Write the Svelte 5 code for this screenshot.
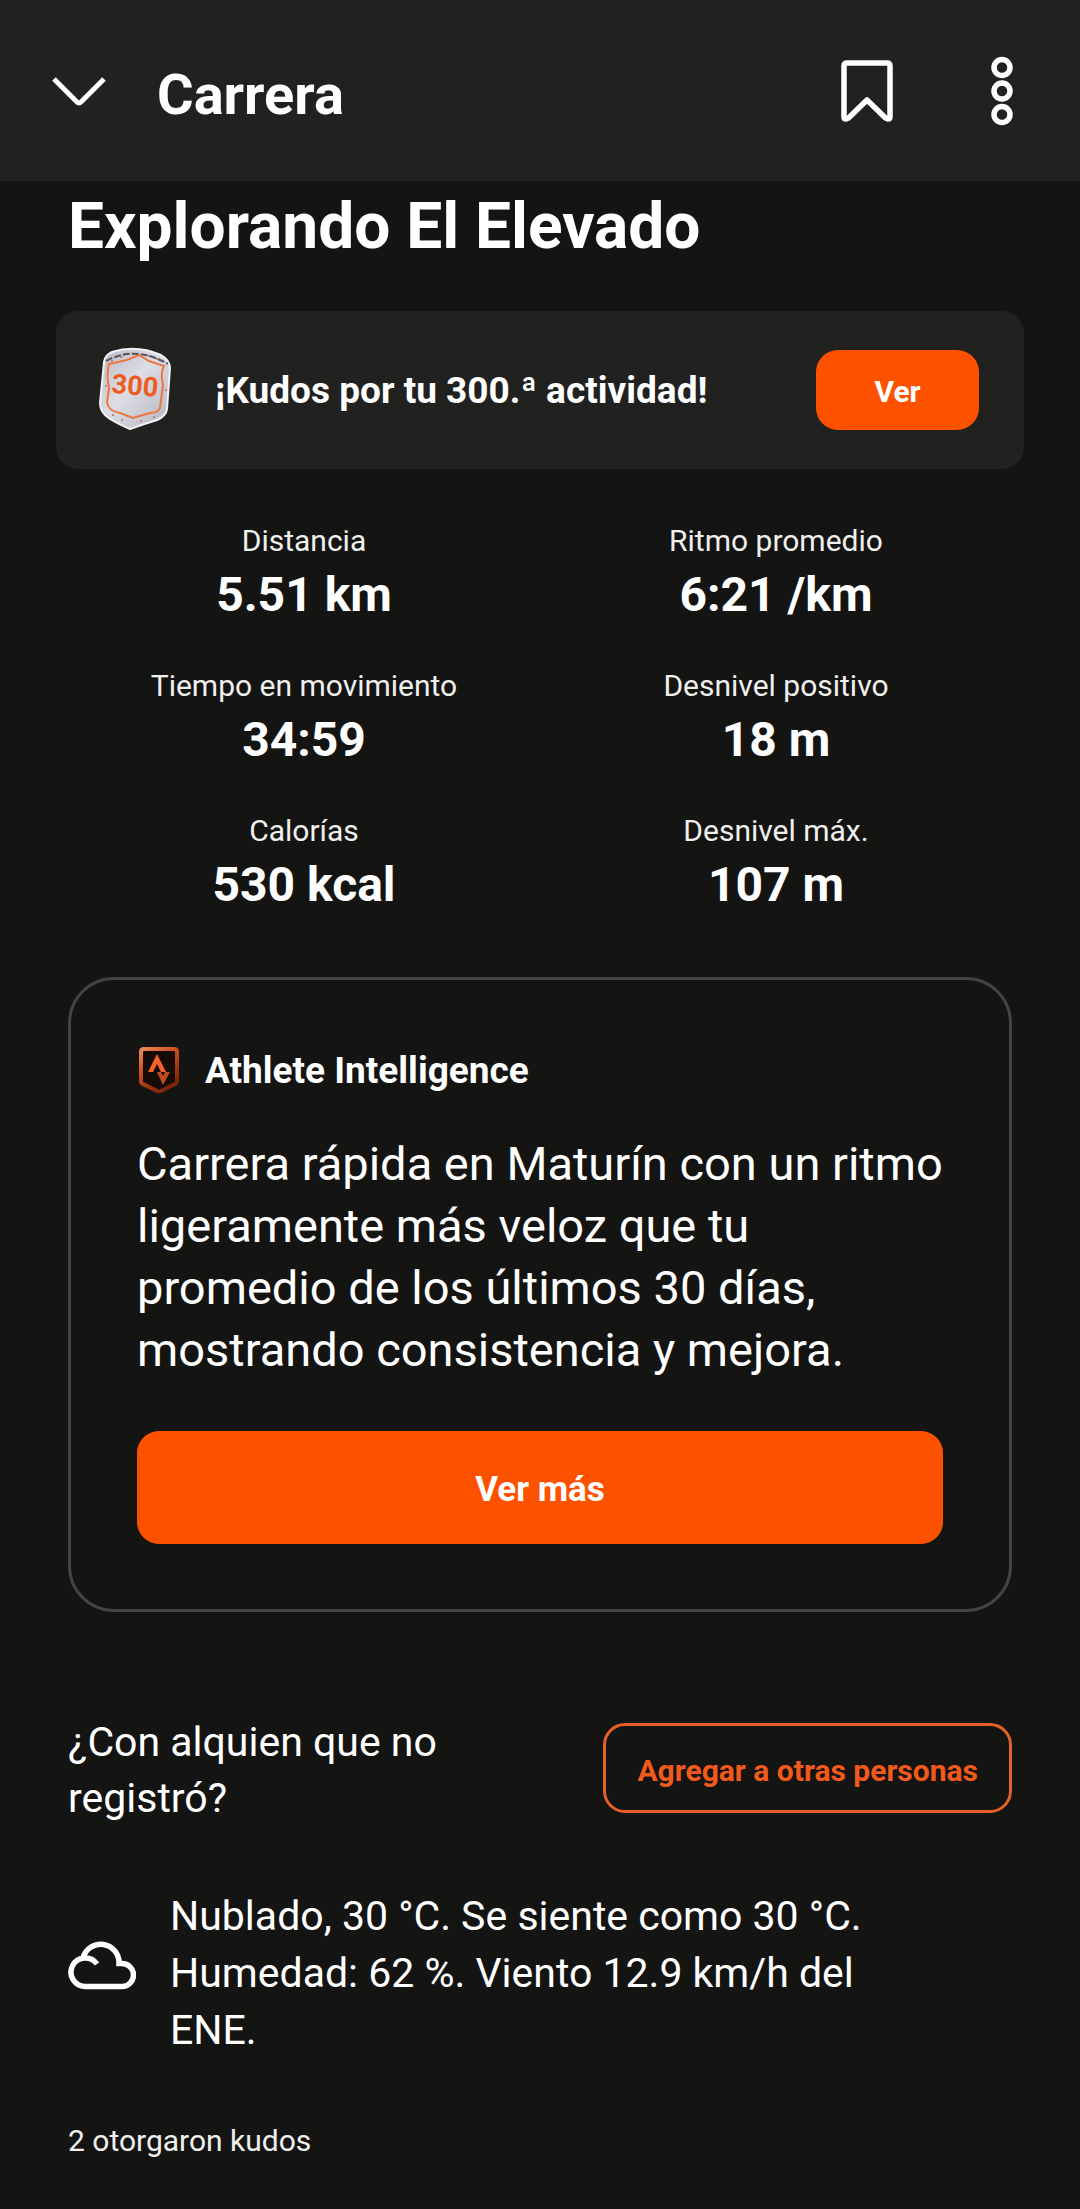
<script>
  let saved = false;

  let stats = [
    { label: "Distancia", value: "5.51 km" },
    { label: "Ritmo promedio", value: "6:21 /km" },
    { label: "Tiempo en movimiento", value: "34:59" },
    { label: "Desnivel positivo", value: "18 m" },
    { label: "Calorías", value: "530 kcal" },
    { label: "Desnivel máx.", value: "107 m" },
  ];
</script>

<header>
  <button class="icon" aria-label="Cerrar">
    <svg width="56" height="40" viewBox="0 0 56 40">
      <path d="M3 8 L26 31 Q28 33 30 31 L53 8" fill="none" stroke="#fff" stroke-width="5" />
    </svg>
  </button>
  <h2>Carrera</h2>
  <button class="icon" aria-label="Guardar" aria-pressed={saved} on:click={() => (saved = !saved)}>
    <svg width="52" height="64" viewBox="0 0 52 64">
      <path
        d="M6 4 H46 Q49 4 49 7 V58 Q49 60 47 60 L44.500 59 L26 41 L7.500 59 L5 60 Q3 60 3 58 V7 Q3 4 6 4 Z"
        fill={saved ? "#fff" : "none"}
        stroke="#fff"
        stroke-width="5.500"
        stroke-linejoin="round"
      />
    </svg>
  </button>
  <button class="icon" aria-label="Más opciones">
    <svg width="22" height="70" viewBox="0 0 22 70" fill="none" stroke="#fff" stroke-width="5.500">
      <circle cx="11" cy="11.500" r="8" />
      <circle cx="11" cy="35" r="8" />
      <circle cx="11" cy="58.500" r="8" />
    </svg>
  </button>
</header>

<main>
  <h1>Explorando El Elevado</h1>

  <section class="banner">
    <svg class="badge" width="76" height="88" viewBox="0 0 76 88">
      <defs>
        <linearGradient id="silver" x1="0" y1="0" x2="1" y2="1">
          <stop offset="0" stop-color="#b9b9c1" />
          <stop offset="0.450" stop-color="#dddde5" />
          <stop offset="1" stop-color="#b4b4bc" />
        </linearGradient>
      </defs>
      <path
        d="M7 16 Q8 9 15 6 Q39 -2 64 9 Q73 14 73 22 L70 63 Q69 70 60 74 Q47 78 33 83 Q21 78 13 73 Q3 67 3 57 Z"
        fill="url(#silver)"
        stroke="#f1f1f5"
        stroke-width="2"
      />
      <path d="M9 15 Q38 -1 71 18" fill="none" stroke="#55555c" stroke-width="2" stroke-dasharray="7 2" />
      <path
        d="M12 18 L30 14 L42 9 L52 15 L67 20 Q63 27 66 39 L63 62 Q61 67 53 67 L36 72 L23 67 Q11 65 10 56 L12 42 Q9 30 12 18 Z"
        fill="none"
        stroke="#ee7440"
        stroke-width="2"
      />
      <g fill="#bd6d50">
        <circle cx="15" cy="15" r="1" /><circle cx="24" cy="11" r="1" />
        <circle cx="52" cy="10" r="1" /><circle cx="60" cy="13" r="1" />
        <circle cx="9" cy="40" r="1" /><circle cx="69" cy="44" r="1" />
        <circle cx="16" cy="69" r="1" /><circle cx="25" cy="74" r="1" />
        <circle cx="44" cy="75" r="1" /><circle cx="57" cy="71" r="1" />
      </g>
      <text x="38" y="49" text-anchor="middle" transform="rotate(5 39 40)">300</text>
    </svg>
    <p>¡Kudos por tu 300.ª actividad!</p>
    <button class="filled small">Ver</button>
  </section>

  <dl>
    {#each stats as stat}
      <div class="stat">
        <dt>{stat.label}</dt>
        <dd>{stat.value}</dd>
      </div>
    {/each}
  </dl>

  <section class="card">
    <h3>
      <svg width="44" height="48" viewBox="0 0 44 48">
        <defs>
          <linearGradient id="ember" x1="0" y1="0" x2="0.600" y2="1">
            <stop offset="0" stop-color="#e88a5c" />
            <stop offset="0.400" stop-color="#d0501f" />
            <stop offset="1" stop-color="#7c2608" />
          </linearGradient>
        </defs>
        <path
          d="M7 2 H37 Q40 2 40 5 V34 Q40 36 38 37 L24 44 Q22 45 20 44 L6 37 Q4 36 4 34 V5 Q4 2 7 2 Z"
          fill="#160b07"
          stroke="url(#ember)"
          stroke-width="4"
        />
        <path d="M20 7 L29 25 H24 L20 17 L16 25 H11 Z" fill="#f4612a" />
        <path d="M20 25 H24 L26 29 L28 25 H33 L26 38 Z" fill="#c44a20" />
      </svg>
      Athlete Intelligence
    </h3>
    <p>
      Carrera rápida en Maturín con un ritmo<br />
      ligeramente más veloz que tu<br />
      promedio de los últimos 30 días,<br />
      mostrando consistencia y mejora.
    </p>
    <button class="filled">Ver más</button>
  </section>

  <section class="people">
    <p>¿Con alquien que no registró?</p>
    <button class="outlined">Agregar a otras personas</button>
  </section>

  <section class="weather">
    <svg width="68" height="62" viewBox="0 0 68 62" fill="none" stroke="#fff" stroke-width="5.500">
      <path d="M15 17 A18.300 18.300 0 0 1 51 22.500 H54 A11.500 11.500 0 0 1 54 45.500 H17 A14.300 14.300 0 1 1 29 23" />
    </svg>
    <p>
      Nublado, 30 °C. Se siente como 30 °C.<br />
      Humedad: 62 %. Viento 12.9 km/h del<br />
      ENE.
    </p>
  </section>

  <p class="kudos">2 otorgaron kudos</p>
</main>

<style>
  :global(body) {
    background: #141412;
    color: #fff;
    font-family: Roboto, "Liberation Sans", sans-serif;
  }

  h1,
  h2,
  h3,
  p,
  dl,
  dd {
    margin: 0;
  }

  svg {
    display: block;
    flex-shrink: 0;
  }

  button {
    font-family: inherit;
    font-weight: 700;
    cursor: pointer;
  }

  header {
    display: flex;
    align-items: center;
    height: 181px;
    padding: 0 67px 0 51px;
    box-sizing: border-box;
    background: #212120;
  }

  h2 {
    flex: 1;
    margin-left: 50px;
    padding-top: 8px;
    font-size: 56px;
    line-height: 64px;
  }

  .icon {
    padding: 0;
    border: 0;
    background: none;
  }

  .icon + .icon {
    margin-left: 98px;
  }

  main {
    padding: 11px 68px 48px;
  }

  h1 {
    font-size: 64px;
    line-height: 70px;
  }

  .banner {
    display: flex;
    align-items: center;
    margin: 49px -12px 0;
    padding: 39px 45px 39px 41px;
    border-radius: 22px;
    background: #212120;
  }

  .badge {
    margin: -4px 0;
  }

  .badge text {
    fill: #ec5b20;
    font-size: 27px;
    font-weight: 700;
  }

  .banner p {
    flex: 1;
    margin-left: 42px;
    padding-top: 2px;
    font-size: 37px;
    font-weight: 700;
    line-height: 44px;
  }

  .filled {
    width: 100%;
    height: 113px;
    padding: 4px 0 0;
    border: 0;
    border-radius: 22px;
    background: #fc5200;
    color: #fff;
    font-size: 35px;
  }

  .small {
    width: 163px;
    height: 80px;
    padding-top: 2px;
    font-size: 30px;
  }

  dl {
    display: grid;
    grid-template-columns: 1fr 1fr;
    row-gap: 39px;
    margin-top: 51px;
    text-align: center;
  }

  dt {
    color: #f0f0ee;
    font-size: 30px;
    line-height: 42px;
  }

  dd {
    padding-top: 2px;
    font-size: 48px;
    font-weight: 700;
    line-height: 62px;
  }

  .card {
    margin-top: 61px;
    padding: 65px 66px;
    border: 3px solid #444442;
    border-radius: 46px;
  }

  h3 {
    display: flex;
    align-items: center;
    gap: 24px;
    font-size: 37px;
    line-height: 52px;
  }

  .card p {
    margin: 36px 0 50px;
    font-size: 47px;
    line-height: 62px;
  }

  .people {
    display: flex;
    align-items: center;
    justify-content: space-between;
    margin-top: 98px;
  }

  .people p {
    width: 400px;
    padding-top: 4px;
    font-size: 41px;
    line-height: 56px;
  }

  .outlined {
    height: 90px;
    padding: 4px 31px 0;
    border: 3px solid #e5602a;
    border-radius: 22px;
    background: none;
    color: #f2591d;
    font-size: 30px;
  }

  .weather {
    display: flex;
    align-items: center;
    gap: 34px;
    margin-top: 58px;
  }

  .weather p {
    padding-top: 4px;
    font-size: 41px;
    line-height: 57px;
  }

  .kudos {
    margin-top: 61px;
    color: #f0f0ee;
    font-size: 30px;
    line-height: 42px;
  }
</style>
